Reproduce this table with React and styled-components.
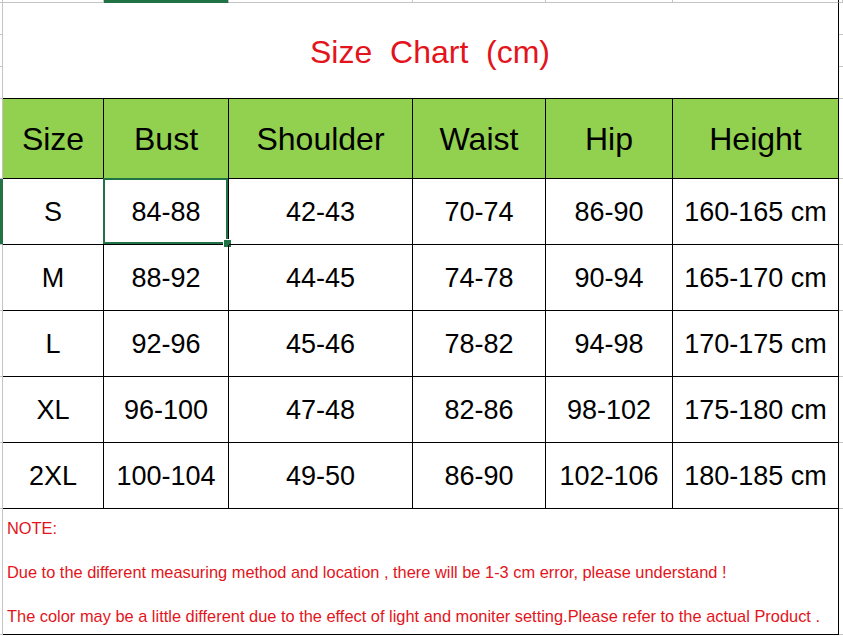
import React from "react";
import styled, { createGlobalStyle } from "styled-components";

// column widths of the sheet (A..F), measured from the gridlines
const COLS = "101px 125px 184px 133px 127px 166px";
const ROWS = [32, 32, 32, 80, 66, 66, 66, 66, 66, 126];
const GRID = "#c4c4c4";
const EXCEL_GREEN = "#217346";

const GlobalStyle = createGlobalStyle`
  html, body {
    margin: 0;
    padding: 0;
    background: #fff;
    overflow: hidden;
  }
  * {
    box-sizing: border-box;
  }
`;

const Sheet = styled.div`
  width: 843px;
  height: 636px;
  display: flex;
  flex-direction: column;
  font-family: "Liberation Sans", Arial, sans-serif;
  background: #fff;
`;

const ColumnStrip = styled.div`
  display: grid;
  grid-template-columns: 3px ${COLS} 1fr;
  height: 3px;
`;

const ColumnMark = styled.div`
  height: 3px;
  background: ${(p) => (p.$active ? EXCEL_GREEN : "#fff")};
  border-bottom: 1px solid ${(p) => (p.$active ? EXCEL_GREEN : GRID)};
  border-right: 1px solid ${(p) => (p.$edge ? "#000" : GRID)};
`;

const Body = styled.div`
  display: flex;
  flex: 1;
`;

const Gutter = styled.div`
  display: flex;
  flex-direction: column;
  width: ${(p) => p.$width};
  flex: ${(p) => (p.$grow ? 1 : "none")};
`;

const GutterMark = styled.div`
  height: ${(p) => p.$h}px;
  background: ${(p) => (p.$active ? EXCEL_GREEN : "#fff")};
  border-bottom: 1px solid ${GRID};
  border-right: ${(p) => (p.$line ? `1px solid ${p.$active ? EXCEL_GREEN : GRID}` : "none")};
`;

const Table = styled.div`
  display: grid;
  grid-template-columns: ${COLS};
  grid-template-rows: 96px 80px repeat(5, 66px) 126px;
`;

const Cell = styled.div`
  position: relative;
  display: flex;
  align-items: center;
  justify-content: center;
  padding-top: 2px;
  border-right: 1px solid #000;
  border-bottom: 1px solid #000;
  color: #000;
  white-space: nowrap;
`;

const TitleCell = styled(Cell)`
  grid-column: 1 / -1;
  padding: 3px 0 0 19px;
  font-size: 32px;
  color: #e3141b;
  white-space: pre;
`;

const HeadCell = styled(Cell)`
  background: #92d050;
  font-size: 32px;
`;

const DataCell = styled(Cell)`
  font-size: 27px;

  ${(p) =>
    p.$selected &&
    `
    &::before {
      content: "";
      position: absolute;
      top: -1px;
      left: -1px;
      right: 0;
      bottom: 0;
      border: 2px solid ${EXCEL_GREEN};
    }
    &::after {
      content: "";
      position: absolute;
      right: -4px;
      bottom: -4px;
      width: 7px;
      height: 7px;
      background: ${EXCEL_GREEN};
      border: 1px solid #fff;
    }
  `}
`;

const NoteCell = styled(Cell)`
  grid-column: 1 / -1;
  flex-direction: column;
  align-items: flex-start;
  justify-content: flex-start;
  gap: 22px;
  padding: 8px 0 0 4px;
  font-size: 16.4px;
  line-height: 22px;
  color: #e3141b;
`;

const headers = ["Size", "Bust", "Shoulder", "Waist", "Hip", "Height"];

const rows = [
  ["S", "84-88", "42-43", "70-74", "86-90", "160-165 cm"],
  ["M", "88-92", "44-45", "74-78", "90-94", "165-170 cm"],
  ["L", "92-96", "45-46", "78-82", "94-98", "170-175 cm"],
  ["XL", "96-100", "47-48", "82-86", "98-102", "175-180 cm"],
  ["2XL", "100-104", "49-50", "86-90", "102-106", "180-185 cm"],
];

const notes = [
  "NOTE:",
  "Due to the different measuring method and location , there will be 1-3 cm error, please understand !",
  "The color may be a little different due to the effect of light and moniter setting.Please refer to the actual Product .",
];

export default function App() {
  return (
    <Sheet>
      <GlobalStyle />
      <ColumnStrip>
        <ColumnMark />
        {headers.map((h, i) => (
          <ColumnMark key={h} $active={i === 1} $edge={i === 5} />
        ))}
        <ColumnMark />
      </ColumnStrip>
      <Body>
        <Gutter $width="3px">
          {ROWS.map((h, i) => (
            <GutterMark key={i} $h={h} $line $active={i === 4} />
          ))}
        </Gutter>
        <Table>
          <TitleCell>{"Size  Chart  (cm)"}</TitleCell>
          {headers.map((h) => (
            <HeadCell key={h}>{h}</HeadCell>
          ))}
          {rows.map((row, r) =>
            row.map((v, c) => (
              <DataCell key={`${r}-${c}`} $selected={r === 0 && c === 1}>
                {v}
              </DataCell>
            ))
          )}
          <NoteCell>
            {notes.map((n) => (
              <div key={n}>{n}</div>
            ))}
          </NoteCell>
        </Table>
        <Gutter $grow>
          {ROWS.map((h, i) => (
            <GutterMark key={i} $h={h} />
          ))}
        </Gutter>
      </Body>
    </Sheet>
  );
}
